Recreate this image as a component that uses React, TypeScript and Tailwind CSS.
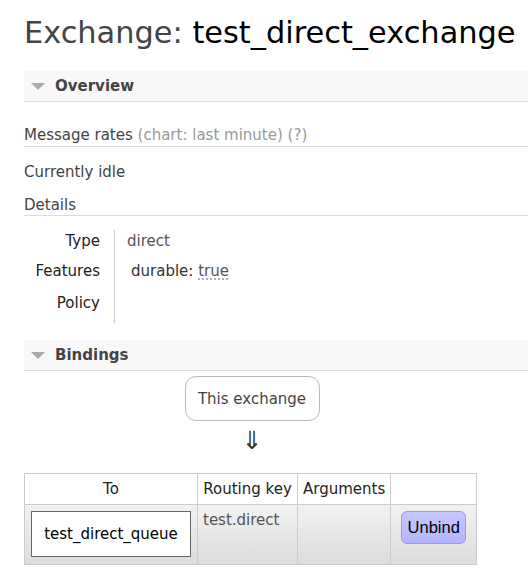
import React from "react";

function Triangle() {
  return (
    <svg width="14" height="7" viewBox="0 0 14 7" className="shrink-0">
      <polygon points="0,0 14,0 7,7" fill="#aaaaaa" />
    </svg>
  );
}

function SectionHeader({ title }: { title: string }) {
  return (
    <div className="flex h-[31px] items-center gap-[10px] border-b border-[#dddddd] bg-[#f8f8f8] pl-[7px]">
      <Triangle />
      <span className="text-[15px] font-bold text-[#444]">{title}</span>
    </div>
  );
}

const details = [
  { label: "Type", h: "h-[22px]", value: <span className="text-[#555]">direct</span> },
  {
    label: "Features",
    h: "h-[38px]",
    value: (
      <span className="pl-[4px] text-[#333]">
        durable:{" "}
        <abbr className="text-[#555] underline decoration-[#999] decoration-dotted underline-offset-[3px]">
          true
        </abbr>
      </span>
    ),
  },
  { label: "Policy", h: "h-[26px]", value: null },
];

export default function App() {
  return (
    <div className="min-h-screen overflow-hidden bg-white pl-6 pt-[13px] font-['DejaVu_Sans',sans-serif] text-[15px] text-[#444]">
      <h1 className="text-[30.4px] leading-[40px] text-[#444]">
        Exchange: <span className="text-black">test_direct_exchange</span>
      </h1>

      <div className="mt-[18px]">
        <SectionHeader title="Overview" />
      </div>

      <div className="mt-[23px] border-b border-[#dddddd] pb-[1px] leading-[20px]">
        Message rates <span className="text-[#999]">(chart: last minute) (?)</span>
      </div>

      <div className="mt-[15px] leading-[20px]">Currently idle</div>

      <div className="mt-[13px] border-b border-[#dddddd] leading-[20px]">Details</div>

      <div className="mt-[14px] flex flex-col">
        {details.map((d) => (
          <div key={d.label} className={`flex items-center ${d.h}`}>
            <div className="w-[76px] text-right text-[#222]">{d.label}</div>
            <div className="ml-[14px] flex h-full items-center border-l border-[#cccccc] pl-[12px]">
              {d.value}
            </div>
          </div>
        ))}
        <div className="flex h-[7px]">
          <div className="w-[76px]" />
          <div className="ml-[14px] border-l border-[#cccccc]" />
        </div>
      </div>

      <div className="mt-[17px]">
        <SectionHeader title="Bindings" />
      </div>

      <div className="flex w-[456px] flex-col items-center">
        <div className="mt-[5px] flex h-[45px] w-[135px] items-center justify-center rounded-[11px] border border-[#bbbbbb] pt-[2px] text-[#444]">
          This exchange
        </div>
        <div className="mt-[6px] text-[25px] leading-[28px] text-[#333]">⇓</div>
      </div>

      <table className="mt-[18px] border-collapse text-[15px]">
        <thead>
          <tr className="h-[31px] bg-white text-[#222]">
            <th className="w-[173px] border border-[#cccccc] font-normal">To</th>
            <th className="w-[100px] border border-[#cccccc] px-[5px] font-normal">Routing key</th>
            <th className="w-[93px] border border-[#cccccc] px-[5px] font-normal">Arguments</th>
            <th className="w-[85px] border border-[#cccccc]" />
          </tr>
        </thead>
        <tbody>
          <tr className="h-[60px] bg-gradient-to-b from-[#f2f2f2] to-[#dcdcdc]">
            <td className="border border-[#cccccc] px-[6px] py-[6px] align-top">
              <div className="flex h-[46px] items-center justify-center border border-[#666] bg-white text-black">
                test_direct_queue
              </div>
            </td>
            <td className="border border-[#cccccc] px-[5px] pt-[5px] align-top leading-[20px] text-[#555]">
              test.direct
            </td>
            <td className="border border-[#cccccc]" />
            <td className="border border-[#cccccc] px-[10px] pt-[6px] align-top">
              <button className="h-[33px] w-[65px] rounded-[6px] border border-[#9999ee] bg-gradient-to-b from-[#c8c8ff] to-[#b4b4ff] font-['Liberation_Sans',sans-serif] text-[16.5px] text-black">
                Unbind
              </button>
            </td>
          </tr>
        </tbody>
      </table>
    </div>
  );
}
